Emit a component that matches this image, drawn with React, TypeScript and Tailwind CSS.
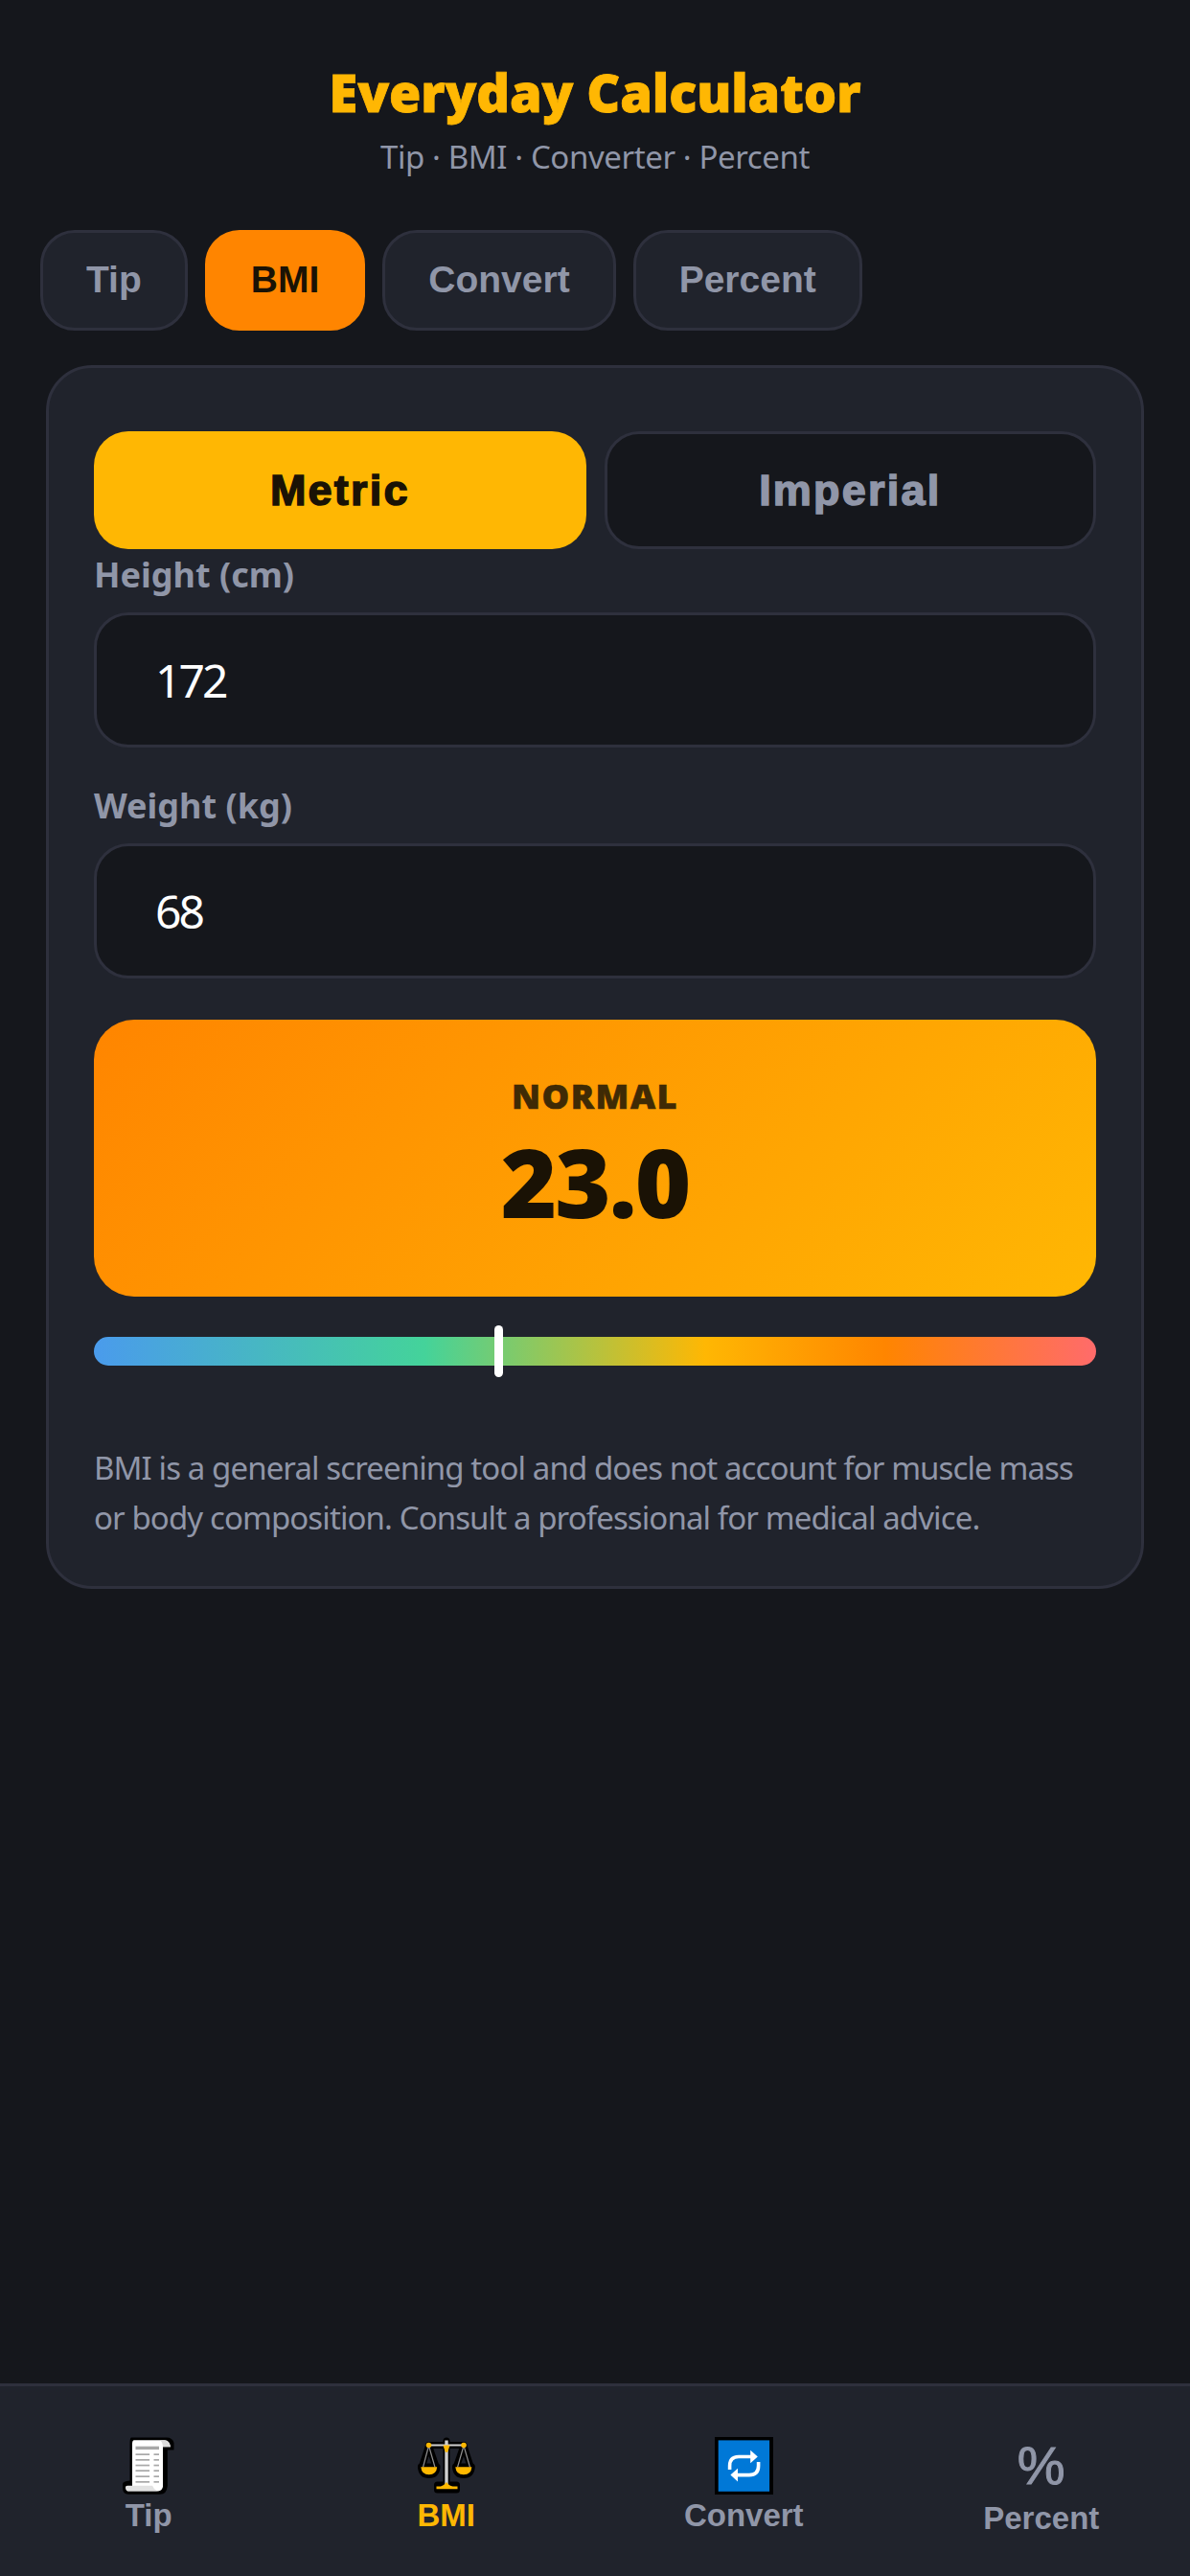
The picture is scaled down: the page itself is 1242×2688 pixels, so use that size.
import React from "react";

const body = "font-['Noto_Sans','Open_Sans',sans-serif]";
const arial = "font-['Liberation_Sans',Arial,sans-serif]";

function ScrollIcon() {
  const rows = [17.3, 23, 28.7, 34.3, 40.3, 46];
  return (
    <svg width="54" height="60" viewBox="0 0 54 60" className="block">
      <path d="M9 0.5H46Q52 0.5 53.5 6V13.5H46.8V51Q46 59.8 39 59.8H6Q0 59.5 0 53V49Q0 46 7.5 45.5V7Q7.5 0.5 9 0.5Z" fill="#000" />
      <path d="M12 3.2H44Q49 3.5 50 10.3H42V52Q41 56 37 56.5H5Q3 55 3.2 52.5L10 51V7Q10 3.4 12 3.2Z" fill="#fff" />
      <path d="M42 3.4H44Q49 3.5 50 10.3H42Q41.8 5 39 3.4Z" fill="#dcdcdc" />
      <path d="M3 52Q3 51 5 50.8H31Q32 54 36 56.3H6Q3 55.5 3 52Z" fill="#e2e2e2" />
      <rect x="13.5" y="9.7" width="24.5" height="3.4" fill="#a8a8a8" />
      {rows.map((y) => (
        <g key={y} fill="#a8a8a8">
          <rect x="13.5" y={y} width="14.6" height="1.7" />
          <rect x="32.5" y={y} width="5.5" height="1.7" />
        </g>
      ))}
    </svg>
  );
}

function ScalesIcon() {
  const outline = (
    <g fill="#000" stroke="#000" strokeWidth="7" strokeLinejoin="round" strokeLinecap="round">
      <path d="M30 4V50M11.5 8.5H48M11.5 9L4 32M11.5 9L19.5 32M48 9L40 32M48 9L55.5 32" fill="none" />
      <path d="M3.5 31H20Q19.5 39.5 11.7 39.5Q4 39.5 3.5 31Z" />
      <path d="M39.5 31H56.3Q55.7 39.5 47.9 39.5Q40 39.5 39.5 31Z" />
      <rect x="20.5" y="50" width="20" height="5" />
    </g>
  );
  return (
    <svg width="60" height="60" viewBox="0 0 60 60" className="block">
      {outline}
      <g stroke="#a9a9a9" fill="none">
        <path d="M11.5 8.5H48" strokeWidth="2" stroke="#d0d0d0" />
        <path d="M30 3.5V49" strokeWidth="3.4" stroke="#d0d0d0" />
        <path d="M11.5 9L5.5 31.5M11.5 9L18 31.5M48 9L41.5 31.5M48 9L54.5 31.5" strokeWidth="1.2" stroke="#8f8f8f" />
      </g>
      <g fill="#ffb800">
        <circle cx="11.5" cy="8.5" r="2.8" />
        <circle cx="48" cy="8.5" r="2.8" />
        <path d="M26.5 8.5H33.5L31.5 15Q30 17 28.5 15Z" />
        <path d="M3.3 31.2H20.2Q19.5 39.3 11.7 39.3Q4 39.3 3.3 31.2Z" />
        <path d="M39.3 31.2H56.4Q55.8 39.3 47.9 39.3Q40 39.3 39.3 31.2Z" />
        <path d="M19.5 54.2V51.5H24Q27 51 30 47Q33 51 36.5 51.5H41.5V54.2Z" />
      </g>
    </svg>
  );
}

function ConvertIcon() {
  return (
    <svg width="61" height="60" viewBox="0 0 61 60" className="block">
      <rect width="61" height="60" fill="#000" />
      <rect x="3.7" y="3.4" width="53.4" height="53.4" fill="#0078d7" />
      <g fill="none" stroke="#fff" strokeWidth="3.6">
        <path d="M15.6 34V30Q15.6 20.5 25 20.5H38.5" />
        <path d="M45.6 26V30Q45.6 39.6 36 39.6H22.5" />
      </g>
      <path d="M37.2 13.7L44.8 20.5L37.2 27.3Z" fill="#fff" />
      <path d="M24 32.8L16.4 39.6L24 46.4Z" fill="#fff" />
    </svg>
  );
}

function NavItem({ icon, label, active, big }: { icon: React.ReactNode; label: string; active?: boolean; big?: boolean }) {
  return (
    <div className="flex flex-1 flex-col items-center">
      <div className="flex h-[60px] items-center justify-center">{icon}</div>
      <span className={`${arial} ${big ? "mt-[3px]" : ""} text-[33px] leading-[44px] font-bold ${active ? "text-[#ffb703]" : "text-[#9096a8]"}`}>{label}</span>
    </div>
  );
}

function Tab({ label, active }: { label: string; active?: boolean }) {
  return (
    <div
      className={`${arial} flex h-[105px] items-center rounded-[36px] border-[3px] px-[45px] text-[39px] font-bold ${
        active ? "border-[#ff8500] bg-[#ff8500] text-[#1a1205]" : "border-[#2e303d] bg-[#20232c] text-[#9096a8]"
      }`}
    >
      {label}
    </div>
  );
}

function Field({ label, value, unitClass }: { label: string; value: string; unitClass: string }) {
  return (
    <div className={unitClass}>
      <div className="text-[36px] leading-[46px] font-bold text-[#9096a8]">{label}</div>
      <input
        readOnly
        value={value}
        className="mt-[16px] block h-[141px] w-full rounded-[36px] border-[3px] border-[#2e303d] bg-[#15171c] pl-[61px] text-[48px] text-white tracking-[-3px] outline-none"
      />
    </div>
  );
}

export default function App() {
  return (
    <div className={`${body} flex min-h-screen flex-col bg-[#15171c]`}>
      <main className="flex-1">
        <header className="pt-[60px] text-center">
          <h1 className="text-[54px] leading-[72px] font-black text-[#ffb703] tracking-[-0.1px] [-webkit-text-stroke:0.8px_#ffb703]">Everyday Calculator</h1>
          <p className="mt-[10px] text-[33px] leading-[44px] text-[#9096a8] tracking-[-0.4px]">Tip · BMI · Converter · Percent</p>
        </header>
        <nav className="mt-[54px] flex gap-[18px] pl-[42px]">
          <Tab label="Tip" />
          <Tab label="BMI" active />
          <Tab label="Convert" />
          <Tab label="Percent" />
        </nav>
        <section className="mx-[48px] mt-[36px] rounded-[48px] border-[3px] border-[#2e303d] bg-[#20232c] px-[47px] pt-[66px] pb-[46px]">
          <div className={`${arial} grid grid-cols-2 gap-[19px]`}>
            <div className="flex h-[123px] items-center justify-center rounded-[36px] bg-[#ffb703] text-[45px] font-bold tracking-[2.2px] text-[#1a1205] [-webkit-text-stroke:1.5px_#1a1205]">Metric</div>
            <div className="flex h-[123px] items-center justify-center rounded-[36px] border-[3px] border-[#2e303d] bg-[#15171c] text-[45px] font-bold tracking-[2.2px] text-[#9096a8] [-webkit-text-stroke:1.5px_#9096a8]">Imperial</div>
          </div>
          <Field label="Height (cm)" value="172" unitClass="mt-[4px]" />
          <Field label="Weight (kg)" value="68" unitClass="mt-[38px]" />
          <div className="mt-[43px] flex h-[289px] flex-col items-center rounded-[42px] bg-[linear-gradient(135deg,#ff8500,#ffb703)]">
            <div className="mt-[56px] text-[36px] leading-[48px] font-black tracking-[1.5px] text-[#3f2a05] [-webkit-text-stroke:0.6px_#3f2a05]">NORMAL</div>
            <div className="mt-[4px] text-[100px] leading-[120px] font-black text-[#1a1205] tracking-[-2px]">23.0</div>
          </div>
          <div className="relative mt-[42px] h-[30px] rounded-full bg-[linear-gradient(90deg,#4a9bec_0%,#44d39a_33%,#ffb703_61%,#ff8500_79%,#ff6b6b_100%)]">
            <div className="absolute top-[-12px] left-[40%] h-[54px] w-[9px] rounded-full bg-white" />
          </div>
          <p className="mt-[81px] text-[33px] leading-[51.5px] tracking-[-0.9px] text-[#9096a8]">
            BMI is a general screening tool and does not account for muscle mass or body composition. Consult a professional for medical advice.
          </p>
        </section>
      </main>
      <footer className="flex h-[201px] border-t-[3px] border-[#2e303d] bg-[#20232c] pt-[53px]">
        <NavItem icon={<ScrollIcon />} label="Tip" />
        <NavItem icon={<ScalesIcon />} label="BMI" active />
        <NavItem icon={<ConvertIcon />} label="Convert" />
        <NavItem icon={<span className={`${arial} text-[56px] leading-[60px] text-[#9096a8] [-webkit-text-stroke:1px_#9096a8]`}>%</span>} label="Percent" big />
      </footer>
    </div>
  );
}
